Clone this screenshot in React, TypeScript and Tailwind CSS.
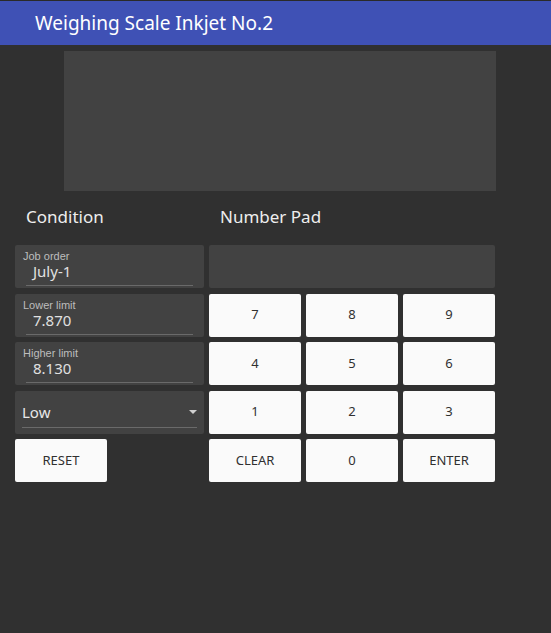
const font = { fontFamily: '"Noto Sans", "Open Sans", sans-serif' };

function Field({ label, value }: { label: string; value: string }) {
  return (
    <div className="col-span-2 bg-[#424242] rounded-[2px] pl-[8px] pr-[11px] pt-[5px]">
      <div className="text-[11px] leading-[13px] text-[#bdbdbd]" style={{ fontFamily: '"Liberation Sans", sans-serif' }}>
        {label}
      </div>
      <div className="pl-[10px] text-[15px] leading-[16px] text-[#e0e0e0]">{value}</div>
      <div className="ml-[3px] mt-[6px] h-px bg-[#6a6a6a]" />
    </div>
  );
}

function PadButton({ children, className = "" }: { children: React.ReactNode; className?: string }) {
  return (
    <button className={`bg-[#fafafa] rounded-[2px] text-[13px] text-[#303030] flex items-center justify-center ${className}`}>
      {children}
    </button>
  );
}

export default function App() {
  const keys = ["7", "8", "9", "4", "5", "6", "1", "2", "3"];
  return (
    <div className="min-h-[633px] bg-[#303030]" style={font}>
      <div className="h-px bg-[#2a2a2a]" />
      <header className="h-[44px] bg-[#3f51b5] flex items-center pl-[35px] text-[19px] text-white">
        Weighing Scale Inkjet No.2
      </header>
      <div className="ml-[64px] mt-[6px] w-[432px] h-[140px] bg-[#424242]" />
      <div className="flex mt-[15px] h-[22px] items-center text-[17px] text-[#eeeeee]">
        <div className="pl-[26px] w-[220px]">Condition</div>
        <div>Number Pad</div>
      </div>
      <div className="ml-[15px] mt-[17px] w-[480px] grid grid-cols-5 gap-x-[5px] gap-y-[5.5px] auto-rows-[43px]">
        <Field label="Job order" value="July-1" />
        <div className="col-span-3 bg-[#424242] rounded-[2px]" />
        <Field label="Lower limit" value="7.870" />
        {keys.slice(0, 3).map((k) => (
          <PadButton key={k}>{k}</PadButton>
        ))}
        <Field label="Higher limit" value="8.130" />
        {keys.slice(3, 6).map((k) => (
          <PadButton key={k}>{k}</PadButton>
        ))}
        <div className="col-span-2 bg-[#424242] rounded-[2px] px-[7px] pt-[12px]">
          <div className="flex items-center justify-between">
            <span className="text-[15px] leading-[18px] text-[#e8e8e8]">Low</span>
            <svg width="8" height="4" viewBox="0 0 8 4">
              <path d="M0 0 L8 0 L4 4 Z" fill="#d0d0d0" />
            </svg>
          </div>
          <div className="mt-[6px] h-px bg-[#6a6a6a]" />
        </div>
        {keys.slice(6, 9).map((k) => (
          <PadButton key={k}>{k}</PadButton>
        ))}
        <PadButton>RESET</PadButton>
        <div />
        <PadButton>CLEAR</PadButton>
        <PadButton>0</PadButton>
        <PadButton>ENTER</PadButton>
      </div>
    </div>
  );
}
